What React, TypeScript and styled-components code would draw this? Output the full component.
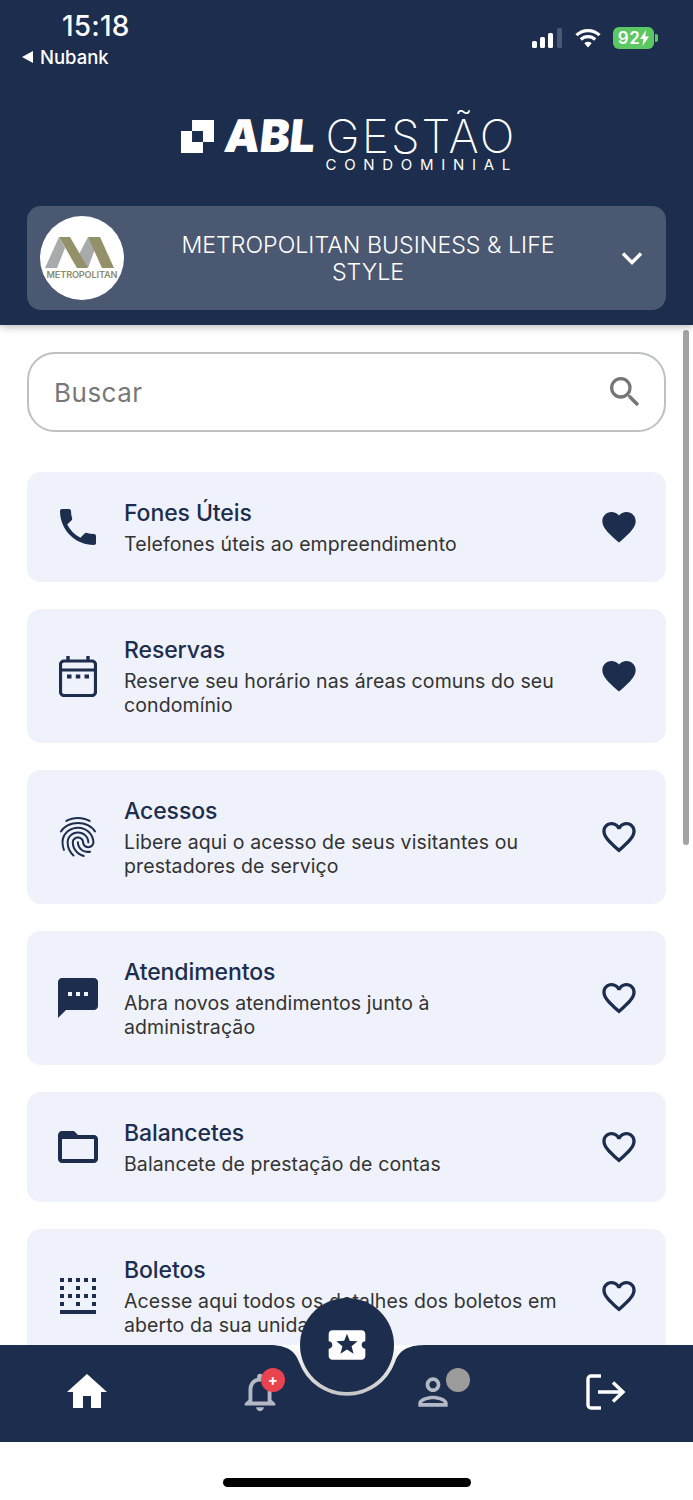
import { ReactNode } from "react";
import styled, { createGlobalStyle } from "styled-components";
import {
  MdBorderBottom,
  MdFavorite,
  MdFavoriteBorder,
  MdFingerprint,
  MdFolderOpen,
  MdHome,
  MdLocalActivity,
  MdLocalPhone,
  MdOutlineNotifications,
  MdOutlinePerson,
  MdSearch,
  MdSms,
} from "react-icons/md";

const navy = "#1c2d4d";

const GlobalStyle = createGlobalStyle`
  html, body { margin: 0; padding: 0; background: #fff; }
  * { box-sizing: border-box; }
  body { font-family: Inter, "Liberation Sans", sans-serif; }
`;

const Page = styled.div`
  position: relative;
  width: 693px;
  height: 1500px;
  display: flex;
  flex-direction: column;
  overflow: hidden;
  background: #fff;
`;

const Header = styled.header`
  position: relative;
  z-index: 2;
  height: 325px;
  flex: none;
  padding: 0 27px;
  background: ${navy};
  box-shadow: 0 2px 8px rgba(0, 0, 0, 0.28);
`;

const StatusBar = styled.div`
  height: 75px;
  display: flex;
  justify-content: space-between;
  color: #fff;
`;

const StatusLeft = styled.div`
  padding-top: 9px;
  margin-left: -5px;
`;

const Clock = styled.div`
  margin-left: 40px;
  font-size: 28px;
  line-height: 34px;
  font-weight: 500;
  letter-spacing: 0.2px;
`;

const BackLink = styled.div`
  display: flex;
  align-items: center;
  gap: 7px;
  margin-top: 1px;
  font-size: 18.5px;
  line-height: 26px;
  font-weight: 500;
  &::before {
    content: "";
    border-style: solid;
    border-width: 6px 11px 6px 0;
    border-color: transparent #fff transparent transparent;
  }
`;

const StatusRight = styled.div`
  display: flex;
  align-items: center;
  gap: 12px;
  height: 76px;
  margin-right: 12px;
`;

const Battery = styled.div`
  position: relative;
  width: 41px;
  height: 22px;
  border-radius: 6px;
  background: #5cc862;
  display: flex;
  align-items: center;
  justify-content: center;
  font-size: 17px;
  font-weight: 600;
  letter-spacing: 0.5px;
  &::after {
    content: "";
    position: absolute;
    right: -4px;
    top: 7px;
    width: 3px;
    height: 8px;
    border-radius: 0 2px 2px 0;
    background: #5cc862;
  }
`;

const Logo = styled.div`
  height: 60px;
  margin: 35px 0 36px;
  display: flex;
  justify-content: center;
  color: #fff;
`;

const LogoMark = styled.svg`
  width: 33px;
  height: 33px;
  margin: 10px 10px 0 0;
  flex: none;
  fill: #fff;
`;

const LogoAbl = styled.div`
  width: 92px;
  margin: 3px 10px 0 0;
  font-size: 45px;
  line-height: 46px;
  font-weight: 900;
  letter-spacing: -0.2px;
  white-space: nowrap;
  transform: skewX(-6deg);
`;

const LogoText = styled.div`
  width: 187px;
`;

const LogoName = styled.div`
  margin-top: 6px;
  font-size: 46px;
  line-height: 40px;
  font-weight: 200;
  letter-spacing: 2.1px;
  white-space: nowrap;
`;

const LogoSub = styled.div`
  font-size: 15px;
  line-height: 18px;
  font-weight: 400;
  letter-spacing: 7.7px;
  white-space: nowrap;
`;

const Selector = styled.div`
  height: 104px;
  display: flex;
  align-items: center;
  padding: 0 23px 0 13px;
  border-radius: 14px;
  background: #4b5872;
  color: #fff;
`;

const Avatar = styled.svg`
  width: 84px;
  height: 84px;
  flex: none;
`;

const SelectorName = styled.div`
  flex: 1;
  padding: 2px 55px 0 46px;
  text-align: center;
  font-size: 23.2px;
  line-height: 27px;
  font-weight: 300;
`;

const Chevron = styled.svg`
  width: 22px;
  height: 14px;
  flex: none;
  fill: none;
  stroke: #fff;
  stroke-width: 3.4;
`;

const Content = styled.main`
  position: relative;
  flex: 1;
  min-height: 0;
  overflow: hidden;
  padding: 27px 27px 0;
`;

const ScrollThumb = styled.div`
  position: absolute;
  top: 5px;
  right: 4px;
  width: 6px;
  height: 515px;
  border-radius: 3px;
  background: rgba(0, 0, 0, 0.36);
`;

const SearchBox = styled.div`
  height: 80px;
  display: flex;
  align-items: center;
  justify-content: space-between;
  padding: 0 19px 0 25px;
  border: 2px solid #bfc0c2;
  border-radius: 28px;
  margin-bottom: 40px;
  color: #787878;
  font-size: 26px;
  letter-spacing: 0.5px;
`;

const CardList = styled.div`
  display: flex;
  flex-direction: column;
  gap: 27px;
`;

const Card = styled.article`
  display: flex;
  align-items: center;
  flex: none;
  padding: 26px 25px 26px 27px;
  border-radius: 14px;
  background: #eff2fb;
  color: ${navy};
`;

const CardIcon = styled.div`
  width: 48px;
  height: 48px;
  margin-right: 22px;
  flex: none;
  display: flex;
  align-items: center;
  justify-content: center;
`;

const CardBody = styled.div`
  flex: 1;
`;

const CardTitle = styled.div`
  font-size: 23px;
  line-height: 30px;
  font-weight: 500;
  letter-spacing: -0.1px;
  margin-bottom: 4px;
`;

const CardText = styled.div`
  width: 438px;
  font-size: 19.5px;
  line-height: 24px;
  font-weight: 400;
  letter-spacing: 0.1px;
  color: #333;
`;

const CardFav = styled.div`
  width: 44px;
  height: 44px;
  flex: none;
  display: flex;
  align-items: center;
  justify-content: center;
`;

const BottomNav = styled.nav`
  position: relative;
  z-index: 3;
  height: 97px;
  flex: none;
  display: grid;
  grid-template-columns: repeat(4, 1fr);
  background: ${navy};
`;

const NavItem = styled.div<{ $color: string }>`
  position: relative;
  height: 94px;
  display: flex;
  align-items: center;
  justify-content: center;
  color: ${(p) => p.$color};
`;

const NavDot = styled.span<{ $color: string; $shift: number }>`
  position: absolute;
  top: 23px;
  left: 50%;
  width: 24px;
  height: 24px;
  margin-left: ${(p) => p.$shift}px;
  border-radius: 50%;
  background: ${(p) => p.$color};
  color: #fff;
  font-size: 15px;
  line-height: 23px;
  font-weight: 700;
  text-align: center;
`;

const Notch = styled.svg`
  position: absolute;
  left: 267px;
  top: 0;
  width: 160px;
  height: 54px;
`;

const Fab = styled.div`
  position: absolute;
  left: 299.5px;
  top: -47px;
  width: 94px;
  height: 94px;
  display: flex;
  align-items: center;
  justify-content: center;
  border-radius: 50%;
  background: ${navy};
  color: #fff;
`;

const HomeBar = styled.div`
  height: 58px;
  flex: none;
  display: flex;
  justify-content: center;
  padding-top: 36px;
  &::after {
    content: "";
    width: 248px;
    height: 9px;
    border-radius: 5px;
    background: #000;
  }
`;

const CalendarIcon = () => (
  <svg width="38" height="42" viewBox="0 0 38 42" fill="none">
    <rect x="1.5" y="6" width="35" height="34.5" rx="3.5" stroke={navy} strokeWidth="3.2" />
    <path d="M1.5 15h35" stroke={navy} strokeWidth="3.2" />
    <path d="M9 1v6M29 1v6" stroke={navy} strokeWidth="3.4" />
    <path d="M8 19.5h4.5v4H8zM16.8 19.5h4.5v4h-4.5zM25.5 19.5H30v4h-4.5z" fill={navy} />
  </svg>
);

const LogoutIcon = () => (
  <svg width="40" height="36" viewBox="0 0 40 36" fill="none" stroke="#fff" strokeWidth="3.4">
    <path d="M15 2H5a3 3 0 0 0-3 3v26a3 3 0 0 0 3 3h10" />
    <path d="M12 18h24M27 8.5 37 18 27 27.5" />
  </svg>
);

type Item = { title: string; text: string; icon: ReactNode; fav?: boolean };

const items: Item[] = [
  {
    title: "Fones Úteis",
    text: "Telefones úteis ao empreendimento",
    icon: <MdLocalPhone size={50} />,
    fav: true,
  },
  {
    title: "Reservas",
    text: "Reserve seu horário nas áreas comuns do seu condomínio",
    icon: <CalendarIcon />,
    fav: true,
  },
  {
    title: "Acessos",
    text: "Libere aqui o acesso de seus visitantes ou prestadores de serviço",
    icon: <MdFingerprint size={48} />,
  },
  {
    title: "Atendimentos",
    text: "Abra novos atendimentos junto à administração",
    icon: <MdSms size={52} />,
  },
  {
    title: "Balancetes",
    text: "Balancete de prestação de contas",
    icon: <MdFolderOpen size={52} />,
  },
  {
    title: "Boletos",
    text: "Acesse aqui todos os detalhes dos boletos em aberto da sua unidade",
    icon: <MdBorderBottom size={52} />,
  },
];

export default function App() {
  return (
    <Page>
      <GlobalStyle />
      <Header>
        <StatusBar>
          <StatusLeft>
            <Clock>15:18</Clock>
            <BackLink>Nubank</BackLink>
          </StatusLeft>
          <StatusRight>
            <svg width="31" height="20" viewBox="0 0 31 20" fill="#fff">
              <rect x="0" y="13" width="5" height="7" rx="1.5" />
              <rect x="8" y="9" width="5" height="11" rx="1.5" />
              <rect x="16" y="5" width="5" height="15" rx="1.5" />
              <rect x="25" y="0" width="5" height="20" rx="1.5" fill="#4b5872" />
            </svg>
            <svg width="26" height="20" viewBox="0 0 26 20" fill="none" stroke="#fff" strokeWidth="3.2">
              <path d="M1.5 7.2a16.5 16.5 0 0 1 23 0" />
              <path d="M5.8 11.5a10.4 10.4 0 0 1 14.4 0" />
              <path d="M13 19.5l-3.7-4.2a5.5 5.5 0 0 1 7.4 0z" fill="#fff" stroke="none" />
            </svg>
            <Battery>
              92
              <svg width="9" height="16" viewBox="0 0 9 16" fill="#fff">
                <path d="M6 0 0 9h3.5L2.5 16 9 6.5H5.2z" />
              </svg>
            </Battery>
          </StatusRight>
        </StatusBar>
        <Logo>
          <LogoMark viewBox="0 0 32 32">
            <path d="M10.7 0H32v21.3H21.3V10.7H10.7zM0 10.7h10.7v10.6h10.6V32H0z" />
          </LogoMark>
          <LogoAbl>ABL</LogoAbl>
          <LogoText>
            <LogoName>GESTÃO</LogoName>
            <LogoSub>CONDOMINIAL</LogoSub>
          </LogoText>
        </Logo>
        <Selector>
          <Avatar viewBox="0 0 84 84">
            <circle cx="42" cy="42" r="42" fill="#fff" />
            <path d="M5 52 19 21l6 11-8 20zM36 44l12-23 7 12-7 19z" fill="#a9aaac" />
            <path d="M19 21h11l18 31H37zM48 21h12l14 31H62z" fill="#93906a" />
            <text x="42" y="62" textAnchor="middle" fontSize="9.2" fontWeight="600" fill="#8d8b6c" fontFamily="Inter, sans-serif" textLength="71">
              METROPOLITAN
            </text>
          </Avatar>
          <SelectorName>METROPOLITAN BUSINESS &amp; LIFE STYLE</SelectorName>
          <Chevron viewBox="0 0 22 14">
            <path d="M2 2.5 11 11.5 20 2.5" />
          </Chevron>
        </Selector>
      </Header>

      <Content>
        <ScrollThumb />
        <SearchBox>
          Buscar
          <MdSearch size={40} color="#757575" />
        </SearchBox>
        <CardList>
          {items.map((item) => (
            <Card key={item.title}>
              <CardIcon>{item.icon}</CardIcon>
              <CardBody>
                <CardTitle>{item.title}</CardTitle>
                <CardText>{item.text}</CardText>
              </CardBody>
              <CardFav>
                {item.fav ? <MdFavorite size={40} /> : <MdFavoriteBorder size={40} />}
              </CardFav>
            </Card>
          ))}
        </CardList>
      </Content>

      <BottomNav>
        <NavItem $color="#fff">
          <MdHome size={48} />
        </NavItem>
        <NavItem $color="#b4b9c5">
          <MdOutlineNotifications size={46} />
          <NavDot $color="#e8434f" $shift={1}>+</NavDot>
        </NavItem>
        <NavItem $color="#b4b9c5">
          <MdOutlinePerson size={44} />
          <NavDot $color="#9b9b9b" $shift={13} />
        </NavItem>
        <NavItem $color="#fff">
          <LogoutIcon />
        </NavItem>
        <Notch viewBox="0 0 160 54">
          <defs>
            <linearGradient id="ring" x1="0" y1="0" x2="0" y2="1">
              <stop offset="0" stopColor="#ffffff" />
              <stop offset="1" stopColor="#c4c4c4" />
            </linearGradient>
          </defs>
          <path d="M0 0C16 0 27 3 32 17A51 51 0 0 0 128 17C133 3 144 0 160 0Z" fill="url(#ring)" />
        </Notch>
        <Fab>
          <MdLocalActivity size={44} />
        </Fab>
      </BottomNav>
      <HomeBar />
    </Page>
  );
}
